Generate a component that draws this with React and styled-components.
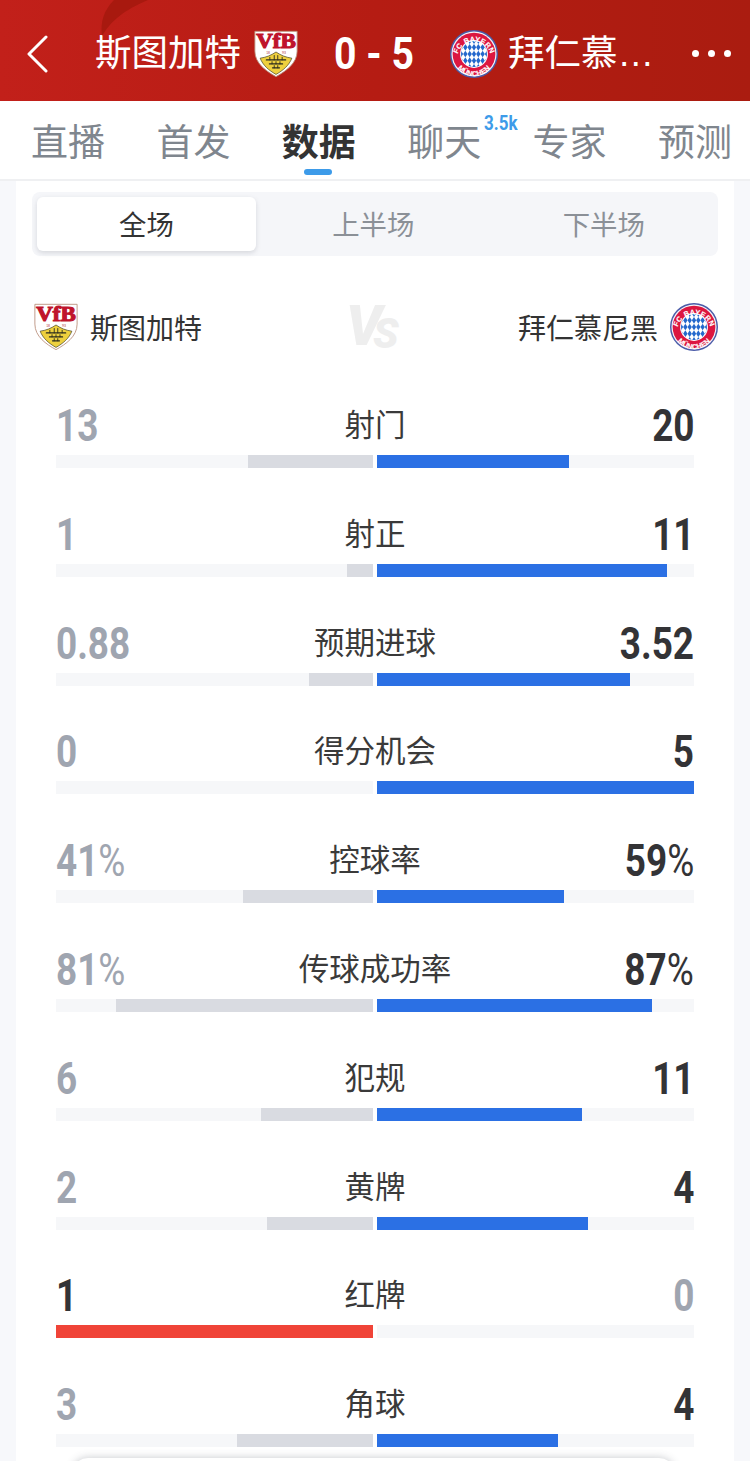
import styled, { createGlobalStyle } from 'styled-components'

const GlobalStyle = createGlobalStyle`
  html, body {
    margin: 0;
    padding: 0;
    background: #f7f8fb;
  }
  * { box-sizing: border-box; }
`

const CJK = `"Liberation Sans", "Noto Sans CJK SC", sans-serif`
const NUM = `"Roboto", "Liberation Sans", sans-serif`

const stats = [
  { name: '射门', home: '13', away: '20', homeBar: 39.4, awayBar: 60.6 },
  { name: '射正', home: '1', away: '11', homeBar: 8.2, awayBar: 91.5 },
  { name: '预期进球', home: '0.88', away: '3.52', homeBar: 20.2, awayBar: 79.8 },
  { name: '得分机会', home: '0', away: '5', homeBar: 0, awayBar: 100 },
  { name: '控球率', home: '41', away: '59', unit: '%', homeBar: 41, awayBar: 59 },
  { name: '传球成功率', home: '81', away: '87', unit: '%', homeBar: 81, awayBar: 86.8 },
  { name: '犯规', home: '6', away: '11', homeBar: 35.3, awayBar: 64.7 },
  { name: '黄牌', home: '2', away: '4', homeBar: 33.4, awayBar: 66.6 },
  { name: '红牌', home: '1', away: '0', homeBar: 100, awayBar: 0, lead: 'home', red: true },
  { name: '角球', home: '3', away: '4', homeBar: 42.9, awayBar: 57.1 },
]

const tabs = ['直播', '首发', '数据', '聊天', '专家', '预测']

const Bayern = ({ size }) => (
  <svg width={size} height={size} viewBox="0 0 100 100">
    <defs>
      <clipPath id="bayernClip"><circle cx="50" cy="50" r="27" /></clipPath>
      <path id="bayernTop" d="M15 54 A35.5 35.5 0 0 1 85 54" />
      <path id="bayernBottom" d="M6 52 A44 44 0 0 0 94 52" />
    </defs>
    <circle cx="50" cy="50" r="50" fill="#4a5ba8" />
    <circle cx="50" cy="50" r="47" fill="#f4f4f8" />
    <circle cx="50" cy="50" r="44.5" fill="#dc1640" />
    <circle cx="50" cy="50" r="29" fill="#fff" />
    <g clipPath="url(#bayernClip)">
      <rect x="20" y="20" width="60" height="60" fill="#fff" />
      {[0, 1, 2, 3, 4].map((r) =>
        [0, 1, 2, 3, 4, 5, 6].map((c) => {
          const x = 23 + c * 9
          const y = 22 + r * 14
          return <path key={`${r}-${c}`} d={`M${x} ${y - 7}L${x + 4.5} ${y}L${x} ${y + 7}L${x - 4.5} ${y}Z`} fill="#2468cc" />
        })
      )}
    </g>
    <text fontFamily="Liberation Sans, sans-serif" fontWeight="700" fontSize="15" fill="#fff" stroke="#fff" strokeWidth="0.3" letterSpacing="0.6">
      <textPath href="#bayernTop" startOffset="50%" textAnchor="middle">FC BAYERN</textPath>
    </text>
    <text fontFamily="Liberation Sans, sans-serif" fontWeight="700" fontSize="15" fill="#fff" stroke="#fff" strokeWidth="0.3" letterSpacing="0.2">
      <textPath href="#bayernBottom" startOffset="50%" textAnchor="middle">MÜNCHEN</textPath>
    </text>
  </svg>
)

const Vfb = ({ width }) => (
  <svg width={width} height={width * 1.08} viewBox="0 0 100 108">
    <path d="M2 3 L98 3 L98 48 C98 76 72 94 50 106 C28 94 2 76 2 48 Z" fill="#fff" stroke="#b98f7c" strokeWidth="2" />
    <text x="50" y="41" textAnchor="middle" fontFamily="Liberation Serif, serif" fontWeight="700" fontSize="48" fill="#bf142c" stroke="#bf142c" strokeWidth="2.6" textLength="90" lengthAdjust="spacingAndGlyphs">VfB</text>
    <text x="32" y="54" textAnchor="middle" fontFamily="Liberation Sans, sans-serif" fontSize="8" fill="#b03a40">18</text>
    <text x="68" y="54" textAnchor="middle" fontFamily="Liberation Sans, sans-serif" fontSize="8" fill="#b03a40">93</text>
    <path d="M14 64 C28 62 38 58 50 50 C62 58 72 62 86 64 C80 80 66 92 50 101 C34 92 20 80 14 64 Z" fill="#eed03e" stroke="#3a3a24" strokeWidth="1.5" />
    <g stroke="#2a2a1e" strokeWidth="2.6" fill="none" strokeLinecap="round">
      <path d="M28 68 H72 M35 77 H65 M42 86 H58" />
      <path d="M36 68 V62 M46 68 V58 M54 68 V58 M64 68 V62 M41 77 V72 M50 77 V72 M59 77 V72 M46 86 V81 M54 86 V81" strokeWidth="2" />
    </g>
  </svg>
)

const App = () => {
  return (
    <Page>
      <GlobalStyle />
      <Header>
        <Swoosh width="60" height="36" viewBox="0 0 60 36">
          <path d="M48 0 C30 8 14 16 2 36 C0 22 4 10 14 0 Z" fill="#a8190f" />
        </Swoosh>
        <BackIcon width="24" height="38" viewBox="0 0 24 38">
          <path d="M19 2 L2 19 L19 36" fill="none" stroke="#fff" strokeWidth="3" strokeLinecap="round" strokeLinejoin="round" />
        </BackIcon>
        <HomeName>斯图加特</HomeName>
        <Vfb width={44} />
        <Score>0 - 5</Score>
        <Bayern size={48} />
        <AwayName>拜仁慕…</AwayName>
        <Dots>
          <i /><i /><i />
        </Dots>
      </Header>

      <TabBar>
        {tabs.map((t) => (
          <Tab key={t} $active={t === '数据'}>
            {t}
            {t === '聊天' && <TabBadge>3.5k</TabBadge>}
          </Tab>
        ))}
      </TabBar>

      <Card>
        <Segments>
          <Segment $active>全场</Segment>
          <Segment>上半场</Segment>
          <Segment>下半场</Segment>
        </Segments>

        <Teams>
          <Team>
            <Vfb width={44} />
            <TeamName>斯图加特</TeamName>
          </Team>
          <Versus>V<small>S</small></Versus>
          <Team>
            <TeamName>拜仁慕尼黑</TeamName>
            <Bayern size={48} />
          </Team>
        </Teams>

        <StatList>
          {stats.map((s) => (
            <StatRow key={s.name}>
              <StatHead>
                <Value $dark={s.lead === 'home'}>{s.home}{s.unit && <Unit>{s.unit}</Unit>}</Value>
                <StatName>{s.name}</StatName>
                <Value $dark={s.lead !== 'home'} $right>{s.away}{s.unit && <Unit>{s.unit}</Unit>}</Value>
              </StatHead>
              <Bars>
                <Track $left>
                  <Fill $color={s.red ? '#f04438' : '#d9dbe1'} style={{ width: `${s.homeBar}%` }} />
                </Track>
                <Track>
                  <Fill $color="#2b70e4" style={{ width: `${s.awayBar}%` }} />
                </Track>
              </Bars>
            </StatRow>
          ))}
        </StatList>
      </Card>

      <FloatingPanel />
    </Page>
  )
}

export default App

const Page = styled.div`
  position: relative;
  width: 750px;
  height: 1461px;
  overflow: hidden;
  background: #f7f8fb;
  font-family: ${CJK};
`

const Header = styled.header`
  position: relative;
  height: 101px;
  padding: 6px 0 0 27px;
  display: flex;
  align-items: center;
  background: linear-gradient(90deg, #c2201a 0%, #b51c13 50%, #aa1c10 100%);
  color: #fff;
`

const Swoosh = styled.svg`
  position: absolute;
  left: 100px;
  top: 0;
`

const BackIcon = styled.svg`
  flex: none;
  margin-right: 44px;
`

const HomeName = styled.div`
  font-size: 36.5px;
  line-height: 48px;
  margin-right: 13px;
  white-space: nowrap;
`

const Score = styled.div`
  width: 152px;
  text-align: center;
  font-family: ${NUM};
  font-weight: 700;
  font-size: 45px;
  white-space: nowrap;
  transform: scaleX(0.87);
`

const AwayName = styled.div`
  width: 148px;
  margin-left: 10px;
  font-size: 36.5px;
  line-height: 48px;
  white-space: nowrap;
`

const Dots = styled.div`
  margin-left: 36px;
  display: flex;
  gap: 9px;

  i {
    width: 7px;
    height: 7px;
    border-radius: 50%;
    background: #fff;
  }
`

const TabBar = styled.nav`
  height: 80px;
  padding: 8px 18px 0 31px;
  display: flex;
  justify-content: space-between;
  align-items: center;
  background: #fff;
  border-bottom: 2px solid #eff0f2;
`

const Tab = styled.div`
  position: relative;
  font-size: 37px;
  line-height: 50px;
  color: ${(p) => (p.$active ? '#333' : '#7f868e')};
  font-weight: ${(p) => (p.$active ? 700 : 400)};

  &::after {
    content: '';
    display: ${(p) => (p.$active ? 'block' : 'none')};
    position: absolute;
    left: 22px;
    bottom: -6px;
    width: 28px;
    height: 6px;
    border-radius: 3px;
    background: #3d9be9;
  }
`

const TabBadge = styled.span`
  position: absolute;
  left: 77px;
  top: -8px;
  font-family: ${NUM};
  font-weight: 700;
  font-size: 20px;
  line-height: 24px;
  color: #3d9be9;
  transform: scaleX(0.85);
  transform-origin: left center;
`

const Card = styled.main`
  width: 718px;
  height: 1280px;
  margin: 0 16px;
  padding: 11px 16px 0;
  background: #fff;
`

const Segments = styled.div`
  height: 64px;
  padding: 5px 1px 5px 5px;
  display: grid;
  grid-template-columns: 219px 1fr 1fr;
  column-gap: 4px;
  align-items: center;
  border-radius: 8px;
  background: #f5f6f9;
`

const Segment = styled.div`
  height: 54px;
  padding-bottom: 2px;
  display: flex;
  align-items: center;
  justify-content: center;
  font-size: 27.4px;
  color: ${(p) => (p.$active ? '#333' : '#8b9097')};
  background: ${(p) => (p.$active ? '#fff' : 'transparent')};
  border-radius: 6px;
  box-shadow: ${(p) => (p.$active ? '0 2px 5px rgba(90, 95, 110, 0.2)' : 'none')};
`

const Teams = styled.div`
  height: 48px;
  margin-top: 47px;
  display: flex;
  align-items: center;
  justify-content: space-between;
  position: relative;
  padding: 0 0 0 2px;
`

const Team = styled.div`
  display: flex;
  align-items: center;
  gap: 12px;
`

const TeamName = styled.div`
  font-size: 28px;
  color: #333;
  white-space: nowrap;
`

const Versus = styled.div`
  position: absolute;
  left: 314px;
  top: -3px;
  font-family: ${NUM};
  font-style: italic;
  font-weight: 900;
  font-size: 56px;
  line-height: 52px;
  letter-spacing: -9px;
  color: #eeeeee;

  small {
    font-size: 42px;
    letter-spacing: 0;
    position: relative;
    top: 3px;
  }
`

const StatList = styled.div`
  margin-top: 48px;
  padding: 0 24px;
`

const StatRow = styled.section`
  height: 108.8px;
  padding-top: 6px;
`

const StatHead = styled.div`
  height: 42px;
  display: grid;
  grid-template-columns: 1fr auto 1fr;
  align-items: center;
`

const Value = styled.div`
  font-family: ${NUM};
  font-weight: 700;
  font-size: 45px;
  line-height: 42px;
  text-align: ${(p) => (p.$right ? 'right' : 'left')};
  color: ${(p) => (p.$dark ? '#333336' : '#9fa5b0')};
  transform: scaleX(0.82);
  transform-origin: ${(p) => (p.$right ? 'right' : 'left')} center;
`

const Unit = styled.span`
  font-weight: 400;
`

const StatName = styled.div`
  margin-top: -2px;
  font-size: 30.5px;
  line-height: 42px;
  color: #3a3a3a;
  white-space: nowrap;
`

const Bars = styled.div`
  margin-top: 8px;
  display: grid;
  grid-template-columns: 317px 317px;
  gap: 4px;
`

const Track = styled.div`
  height: 13px;
  display: flex;
  justify-content: ${(p) => (p.$left ? 'flex-end' : 'flex-start')};
  background: #f6f7f9;
`

const Fill = styled.div`
  height: 100%;
  background: ${(p) => p.$color};
`

const FloatingPanel = styled.div`
  position: absolute;
  left: 72px;
  top: 1458px;
  width: 603px;
  height: 60px;
  border-radius: 16px;
  background: #fff;
  box-shadow: 0 0 8px rgba(70, 75, 90, 0.3);
`
